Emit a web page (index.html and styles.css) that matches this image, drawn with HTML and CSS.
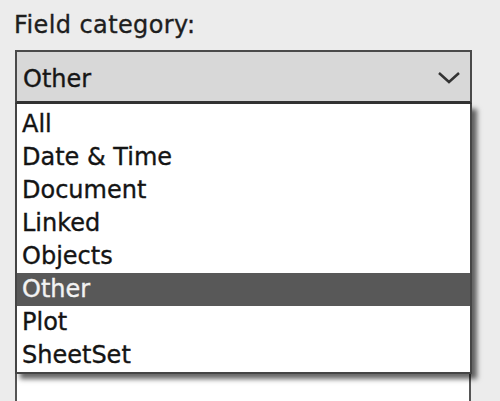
FILE: index.html
```html
<!DOCTYPE html>
<html>
<head>
<meta charset="utf-8">
<link rel="stylesheet" href="styles.css">
</head>
<body>
<div class="panel">
  <div class="label">Field category:</div>
  <div class="field">
    <div class="combo">
      <span class="combo-text">Other</span>
      <svg class="chevron" width="24" height="14" viewBox="0 0 24 14"><polyline points="2,2 12,11 22,2" fill="none" stroke="#333" stroke-width="2.5"/></svg>
    </div>
    <div class="listbox"></div>
    <ul class="dropdown">
      <li class="item">All</li>
      <li class="item">Date &amp; Time</li>
      <li class="item">Document</li>
      <li class="item">Linked</li>
      <li class="item">Objects</li>
      <li class="item selected">Other</li>
      <li class="item">Plot</li>
      <li class="item">SheetSet</li>
    </ul>
  </div>
</div>
</body>
</html>
```

FILE: styles.css
```css
html, body {
  margin: 0;
  padding: 0;
  background: #ececec;
  overflow: hidden;
}
.panel {
  width: 500px;
  height: 401px;
  box-sizing: border-box;
  padding: 10px 0 0 15px;
  font-family: "DejaVu Sans", sans-serif;
  font-size: 24px;
  color: #161616;
  -webkit-text-stroke: 0.35px currentColor;
}
.label {
  line-height: 30px;
  height: 30px;
  margin-left: -1px;
  color: #1e1e1e;
  letter-spacing: 0.4px;
}
.field {
  position: relative;
  width: 457px;
  margin-top: 10px;
}
.combo {
  box-sizing: border-box;
  height: 54px;
  background: #d8d8d8;
  border: 2px solid #4a4a4a;
  border-bottom: 3px solid #333;
  padding: 11px 9px 0 6px;
  display: flex;
  justify-content: space-between;
  align-items: flex-start;
}
.combo-text {
  line-height: 33px;
}
.chevron {
  margin-top: 8px;
}
.listbox {
  box-sizing: border-box;
  height: 289px;
  margin-top: 8px;
  background: #fff;
  border: 2px solid #555;
  border-bottom: none;
  margin-right: 1px;
}
.dropdown {
  position: absolute;
  left: 0;
  top: 54px;
  width: 457px;
  box-sizing: border-box;
  margin: 0;
  padding: 4px 0 0 0;
  list-style: none;
  background: #fff;
  border: 2px solid #454545;
  border-top: none;
  box-shadow: 5px 5px 5px rgba(0, 0, 0, 0.6);
}
.item {
  height: 33px;
  line-height: 33px;
  padding-left: 5px;
  color: #141414;
  white-space: nowrap;
}
.item.selected {
  background: #585858;
  color: #f2f2f2;
}
```
